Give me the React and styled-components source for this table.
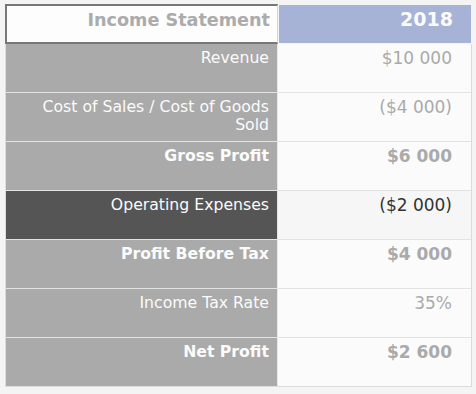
import styled, { createGlobalStyle } from "styled-components"

const Global = createGlobalStyle`
body{
margin:0;
background:#f4f4f4;
font-family:"DejaVu Sans", Verdana, sans-serif;
}`

const Page = styled.div`
padding:4px 5px;`

const Table = styled.div`
width:467px;
display:flex;
flex-direction:column;`

const HeadRow = styled.div`
display:grid;
grid-template-columns:273px 1fr;
height:40px;`

const HeadTitle = styled.div`
border:2px solid #777;
border-right:1px solid #d4d4d4;
background:#fdfdfd;
color:#ababab;
font-weight:bold;
font-size:17.6px;
text-align:right;
padding:3px 7px 0 0;
line-height:22px;`

const HeadYear = styled.div`
margin:1px;
background:#a6b3d6;
color:#fafafa;
font-weight:bold;
font-size:19px;
text-align:right;
padding:3px 18px 0 0;
line-height:22px;`

const Body = styled.div`
border:1px solid #dcdcdc;
border-top:none;`

const Row = styled.div`
display:grid;
grid-template-columns:272px 1fr;
height:48px;
border-bottom:1px solid #e3e3e3;
&:last-child{border-bottom:none;}`

const Label = styled.div`
background:${p => p.dark ? "#555555" : "#aaaaaa"};
color:#fbfbfb;
font-size:15.7px;
font-weight:${p => p.bold ? "bold" : "normal"};
text-align:right;
line-height:18px;
padding:5px 8px 0 10px;
border-right:1px solid #e6e6e6;`

const Value = styled.div`
background:${p => p.dark ? "#f6f6f6" : "#fbfbfb"};
color:${p => p.dark ? "#333" : "#aaaaaa"};
font-size:17px;
font-weight:${p => p.bold ? "bold" : "normal"};
text-align:right;
line-height:20px;
padding:4px 19px 0 0;`

const rows = [
  { label: "Revenue", value: "$10 000" },
  { label: "Cost of Sales / Cost of Goods Sold", value: "($4 000)" },
  { label: "Gross Profit", value: "$6 000", bold: true },
  { label: "Operating Expenses", value: "($2 000)", dark: true },
  { label: "Profit Before Tax", value: "$4 000", bold: true },
  { label: "Income Tax Rate", value: "35%" },
  { label: "Net Profit", value: "$2 600", bold: true },
]

const App = () => {
  return (
    <Page>
      <Global />
      <Table>
        <HeadRow>
          <HeadTitle>Income Statement</HeadTitle>
          <HeadYear>2018</HeadYear>
        </HeadRow>
        <Body>
          {rows.map(r => (
            <Row key={r.label}>
              <Label bold={r.bold} dark={r.dark}>{r.label}</Label>
              <Value bold={r.bold} dark={r.dark}>{r.value}</Value>
            </Row>
          ))}
        </Body>
      </Table>
    </Page>
  )
}

export default App
